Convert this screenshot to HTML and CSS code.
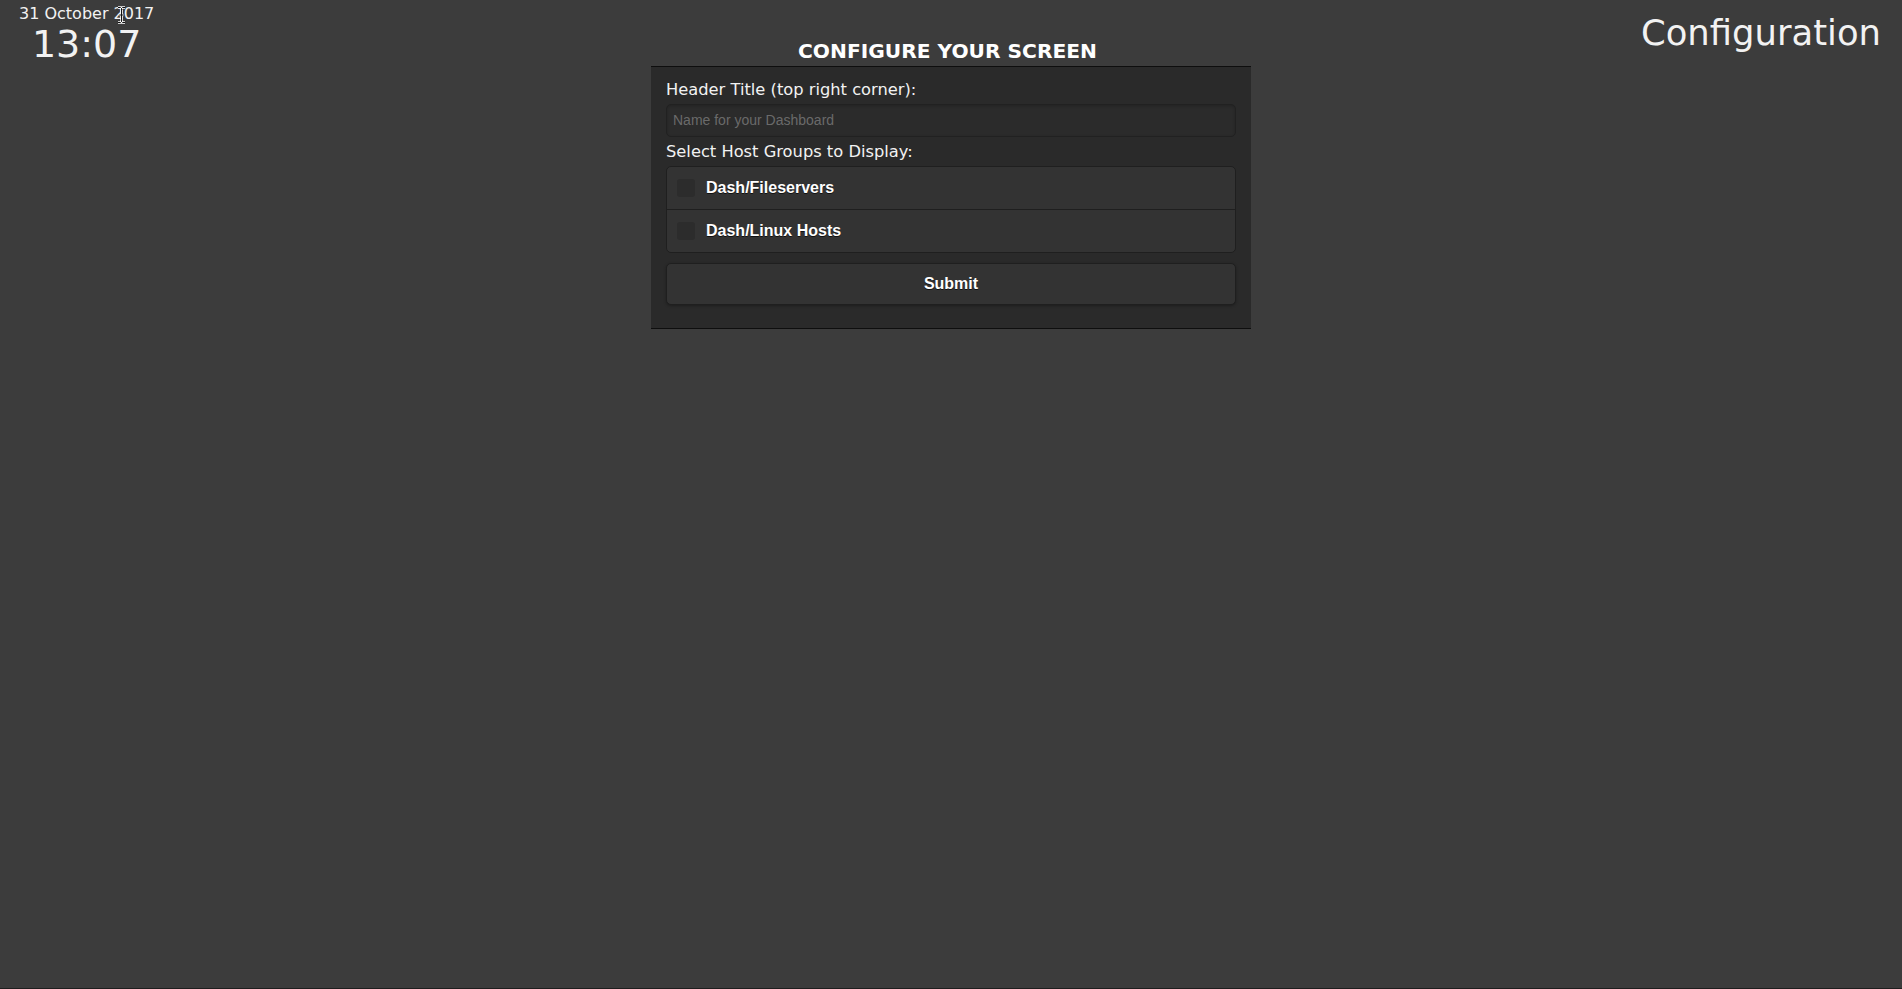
FILE: index.html
```html
<!DOCTYPE html>
<html lang="en">
<head>
<meta charset="utf-8">
<title>Configuration</title>
<link rel="stylesheet" href="styles.css">
</head>
<body>
<div class="page">
  <div class="left">
    <div class="clock">
      <div class="date">31 October 2017</div>
      <div class="time">13:07</div>
    </div>
  </div>
  <main class="center">
    <h1 class="title">CONFIGURE YOUR SCREEN</h1>
    <form class="panel">
      <label class="label" for="hdr">Header Title (top right corner):</label>
      <input id="hdr" class="text-input" type="text" placeholder="Name for your Dashboard">
      <div class="label">Select Host Groups to Display:</div>
      <div class="group-list">
        <label class="group-row"><span class="check"></span><span class="group-name">Dash/Fileservers</span></label>
        <label class="group-row"><span class="check"></span><span class="group-name">Dash/Linux Hosts</span></label>
      </div>
      <button type="button" class="submit">Submit</button>
    </form>
  </main>
  <div class="right">
    <div class="page-title">Configuration</div>
  </div>
</div>
<svg class="cursor" width="9" height="18" viewBox="0 0 9 18">
  <path d="M1 1.5h2.5l1 1 1-1H8M4.5 2.5v13M1 16.5h2.5l1-1 1 1H8M2.5 9h4" fill="none" stroke="#fff" stroke-width="2.6"/>
  <path d="M1 1.5h2.5l1 1 1-1H8M4.5 2.5v13M1 16.5h2.5l1-1 1 1H8M2.5 9h4" fill="none" stroke="#111" stroke-width="1"/>
</svg>
</body>
</html>
```
FILE: styles.css
```css
* { box-sizing: border-box; }
html, body { margin: 0; padding: 0; }
body {
  background: #3c3c3c;
  height: 100vh;
  border-bottom: 1px solid #1e1e1e;
  font-family: "DejaVu Sans", Verdana, sans-serif;
  color: #f2f2f2;
  position: relative;
  overflow: hidden;
}
.page {
  display: grid;
  grid-template-columns: 1fr 600px 1fr;
}
.left { display: flex; align-items: flex-start; }
.clock {
  display: flex;
  flex-direction: column;
  align-items: center;
  padding: 4px 0 0 19px;
}
.date { font-size: 16px; line-height: 20px; }
.time { font-size: 38px; line-height: 40px; }
.right { display: flex; justify-content: flex-end; }
.page-title {
  font-size: 35.4px;
  line-height: 44px;
  padding: 11px 21px 0 0;
}
.center { padding-top: 39px; }
.title {
  margin: 0 0 3px;
  font-size: 20.2px;
  line-height: 24px;
  font-weight: bold;
  color: #fff;
  text-align: center;
  padding-right: 7px;
}
.panel {
  display: flex;
  flex-direction: column;
  background: #2a2a2a;
  border-top: 1px solid #0e0e0e;
  border-bottom: 1px solid #0e0e0e;
  padding: 13px 15px 23px;
}
.label {
  font-size: 16.3px;
  line-height: 20px;
  color: #f2f2f2;
}
.text-input {
  margin: 4px 0 5px;
  height: 33px;
  width: 100%;
  background: #2b2b2b;
  border: 1px solid #212121;
  border-radius: 5px;
  padding: 0 6px 1px;
  font-family: "Liberation Sans", Arial, sans-serif;
  font-size: 14px;
  color: #eee;
  outline: none;
  box-shadow: inset 0 1px 3px rgba(0,0,0,0.2);
}
.text-input::placeholder { color: #6a6a6a; }
.group-list {
  margin-top: 4px;
  border: 1px solid #1f1f1f;
  border-radius: 5px;
  overflow: hidden;
  background: #333;
}
.group-row {
  display: flex;
  align-items: center;
  height: 42px;
  padding-left: 10px;
  gap: 11px;
  font-family: "Liberation Sans", Arial, sans-serif;
  font-size: 16px;
  font-weight: bold;
  color: #fff;
  text-shadow: 0 1px 0 #111;
}
.group-row + .group-row {
  border-top: 1px solid #1f1f1f;
  height: 43px;
}
.check {
  width: 18px;
  height: 18px;
  border-radius: 3px;
  background: #2c2c2c;
}
.submit {
  margin-top: 10px;
  height: 42px;
  width: 100%;
  background: #333;
  border: 1px solid #1f1f1f;
  border-radius: 5px;
  font-family: "Liberation Sans", Arial, sans-serif;
  font-size: 16px;
  font-weight: bold;
  color: #fff;
  text-shadow: 0 1px 0 #111;
  box-shadow: 0 1px 3px rgba(0,0,0,0.3);
}
.cursor {
  position: absolute;
  left: 117px;
  top: 6px;
}
```
